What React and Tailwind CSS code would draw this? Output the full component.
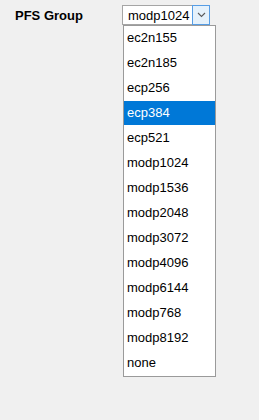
const OPTIONS = [
  "ec2n155",
  "ec2n185",
  "ecp256",
  "ecp384",
  "ecp521",
  "modp1024",
  "modp1536",
  "modp2048",
  "modp3072",
  "modp4096",
  "modp6144",
  "modp768",
  "modp8192",
  "none",
];

function ChevronDown() {
  return (
    <svg width="9" height="6" viewBox="0 0 9 6" fill="none">
      <path d="M1 1l3.5 3.5L8 1" stroke="#5a5a5a" strokeWidth="1.1" />
    </svg>
  );
}

export default function App() {
  const value = "modp1024";
  const highlighted = "ecp384";

  return (
    <div
      className="min-h-[420px] w-full bg-[#f0f0f0] text-black"
      style={{ fontFamily: '"Liberation Sans", Arial, sans-serif' }}
    >
      <div className="flex items-start pl-[15px] pt-[5px]">
        <label className="flex h-[21px] w-[107px] items-center text-[13px] font-bold">
          PFS Group
        </label>
        <div className="relative">
          <div className="flex h-[20px] w-[88px] border border-[#a5a5a5] bg-white">
            <span className="flex flex-1 items-center pl-[5px] text-[13px] leading-none">
              {value}
            </span>
            <span className="-mr-px -my-px flex w-[18px] items-center justify-center border border-[#569de5] bg-[#e5f1fb]">
              <ChevronDown />
            </span>
          </div>
          <ul className="absolute left-px top-[20px] w-[93px] border border-[#9a9a9a] bg-white">
            {OPTIONS.map((opt) => (
              <li key={opt} className="h-[25px]">
                <div
                  className={`flex h-[24px] items-center pl-[3px] text-[13px] ${
                    opt === highlighted ? "bg-[#0078d7] text-white" : ""
                  }`}
                >
                  {opt}
                </div>
              </li>
            ))}
          </ul>
        </div>
      </div>
    </div>
  );
}
